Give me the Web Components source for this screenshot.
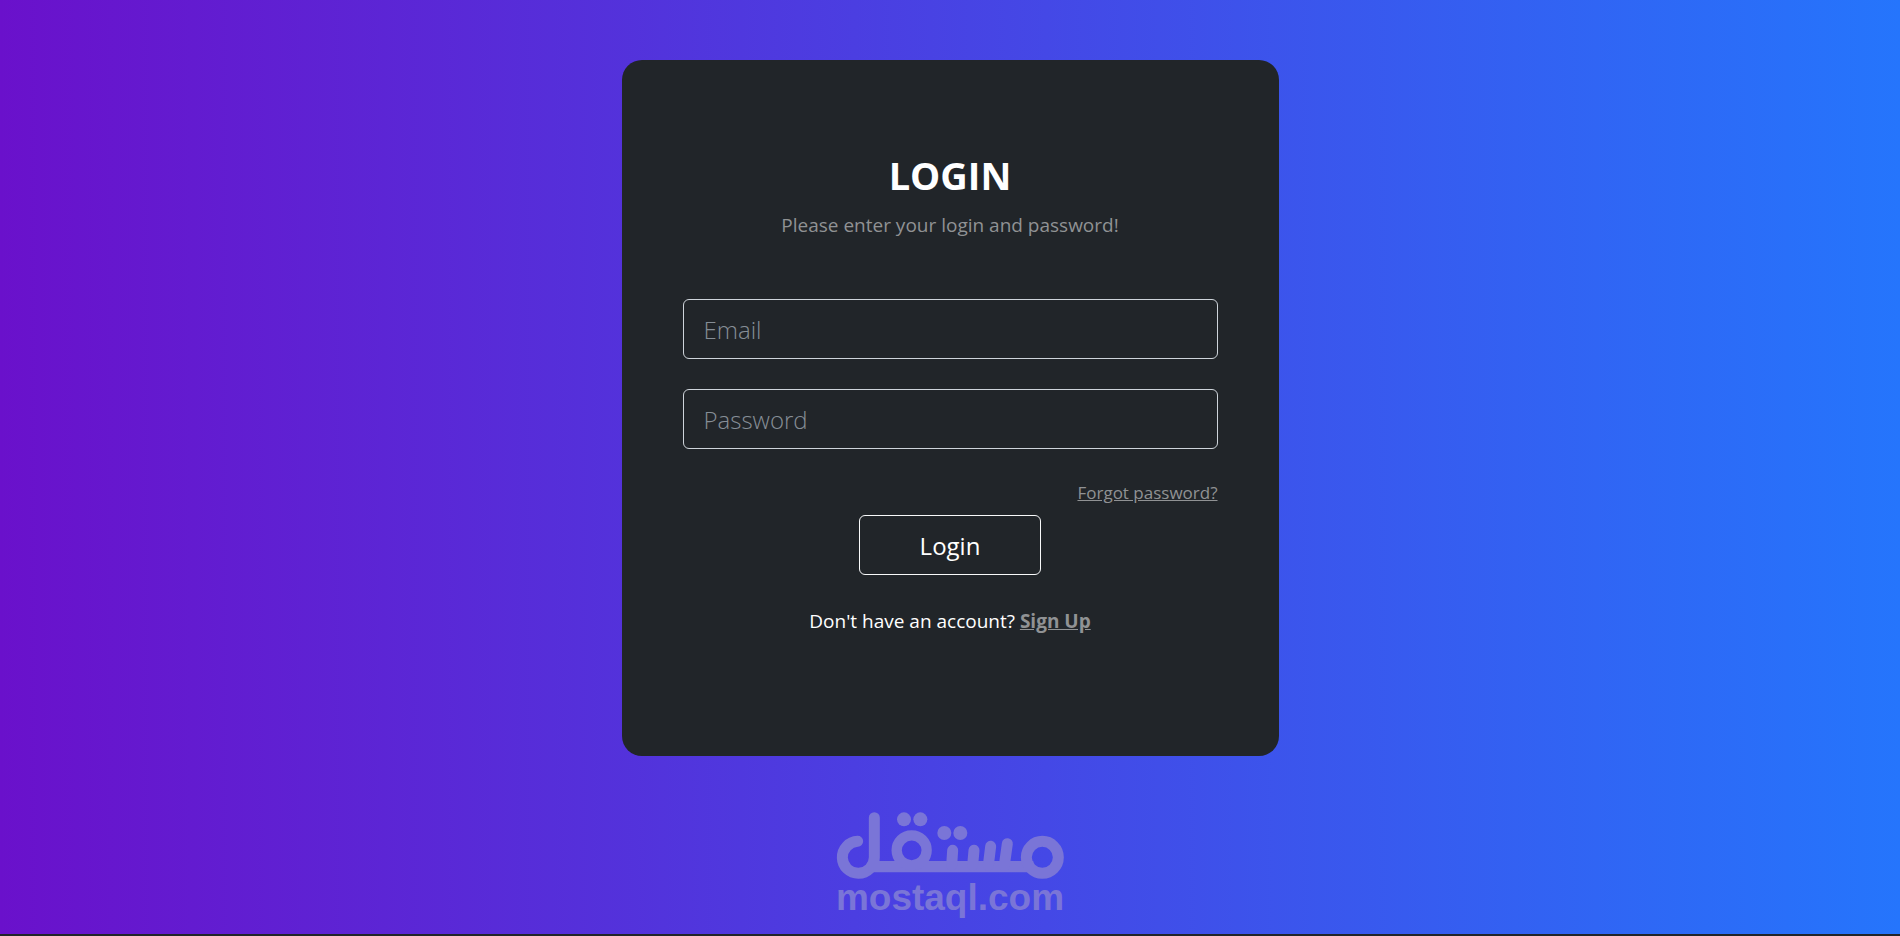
<!DOCTYPE html>
<html lang="en">
<head>
<meta charset="utf-8">
<meta name="viewport" content="width=device-width, initial-scale=1">
<title>Login</title>
<style>
html { background: #212529; }
body { margin: 0; font-family: "Open Sans", "Noto Sans", sans-serif; color: #fff; }
</style>
</head>
<body>
<login-page>
  <login-card>
    <text-field type="email" label="Email"></text-field>
    <text-field type="password" label="Password"></text-field>
  </login-card>
  <brand-mark slot="footer">mostaql.com</brand-mark>
</login-page>
<script>
const define = (name, html, setup) => customElements.define(name, class extends HTMLElement {
  constructor() {
    super();
    this.attachShadow({ mode: "open" }).innerHTML = html;
  }
  connectedCallback() { if (setup) setup(this, this.shadowRoot); }
});

define("login-page", `
<style>
  :host { display: block; }
  main {
    box-sizing: border-box;
    min-height: calc(100vh - 2px);
    padding: 60px 24px 12px;
    display: flex; flex-direction: column; align-items: center; gap: 56px;
    background: linear-gradient(to right, #6a11cb, #2575fc);
  }
</style>
<main><slot></slot><slot name="footer"></slot></main>`);

define("login-card", `
<style>
  :host {
    display: block; box-sizing: border-box; width: 100%; max-width: 657px;
    padding: 91px 61px 119px; border-radius: 20px; background: #212529; text-align: center;
  }
  h1 { margin: 0 0 10px; font-size: 38px; line-height: 48px; font-weight: 700; }
  p { margin: 0; font-size: 19px; line-height: 32px; }
  .hint { color: #909294; margin-bottom: 58px; }
  form { display: flex; flex-direction: column; gap: 30px; }
  a { color: #909294; }
  .forgot { align-self: flex-end; font-size: 17px; line-height: 28px; }
  .actions { display: flex; flex-direction: column; align-items: center; gap: 30px; margin-top: -22px; }
  button {
    height: 60px; padding: 2px 60px 0; border: 1px solid #f8f9fa; border-radius: 6px;
    background: transparent; color: #fff; font: 400 24px/36px "Open Sans", "Noto Sans", sans-serif;
  }
  .signup a { font-weight: 700; }
</style>
<h1>LOGIN</h1>
<p class="hint">Please enter your login and password!</p>
<form>
  <slot></slot>
  <a class="forgot" href="#forgot">Forgot password?</a>
  <div class="actions">
    <button type="button">Login</button>
    <p class="signup">Don't have an account? <a href="#signup">Sign Up</a></p>
  </div>
</form>`);

define("text-field", `
<style>
  :host { display: block; }
  input {
    display: block; box-sizing: border-box; width: 100%; height: 60px; padding: 0 20px;
    border: 1px solid #ced4da; border-radius: 6px; background: transparent; color: #fff;
    font: 300 24px/36px "Open Sans", "Noto Sans", sans-serif;
  }
  input::placeholder { color: #868e96; opacity: 1; }
</style>
<input>`, (host, root) => {
  const input = root.querySelector("input");
  const label = host.getAttribute("label");
  input.type = host.getAttribute("type");
  input.placeholder = label;
  input.setAttribute("aria-label", label);
});

define("brand-mark", `
<style>
  :host {
    display: flex; flex-direction: column; align-items: center;
    color: #7a75d7; font: 700 37px/38px "Liberation Sans", Arial, sans-serif;
  }
  svg { display: block; width: 228px; height: 67px; }
</style>
<svg viewBox="48 48 684 201" fill="none" stroke="currentColor" stroke-width="33" stroke-linecap="round" aria-hidden="true">
  <path d="M113 136A48 48 0 1 0 163 184V65"/>
  <path d="M146 212H640" stroke-linecap="butt" stroke-width="34"/>
  <circle cx="275" cy="163" r="45" stroke-width="31"/>
  <path d="M398 163L395 208M462 163L458 208M512 151L505 208M562 143L553 208"/>
  <circle cx="667" cy="184" r="48"/>
  <g fill="currentColor" stroke="none">
    <circle cx="252" cy="70" r="21"/><circle cx="301" cy="70" r="21"/>
    <circle cx="373" cy="111" r="21"/><circle cx="421" cy="111" r="21"/>
  </g>
</svg>
<slot></slot>`);
</script>
</body>
</html>
